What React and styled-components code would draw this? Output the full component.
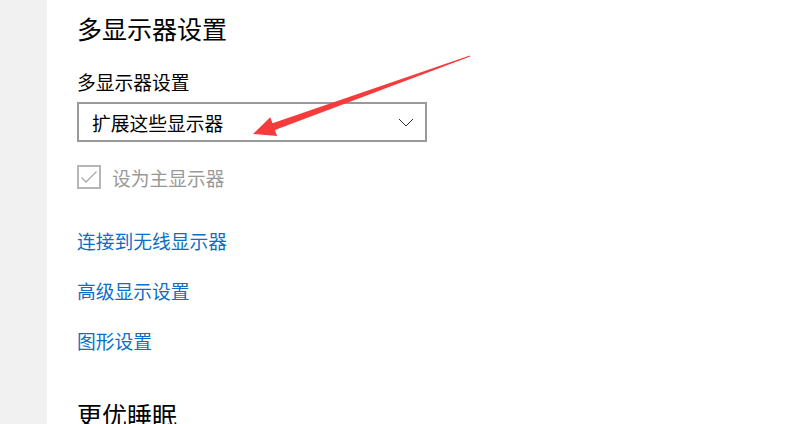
import styled, { createGlobalStyle } from 'styled-components'

const GlobalStyle = createGlobalStyle`
  * {
    box-sizing: border-box;
  }
  html, body {
    margin: 0;
    padding: 0;
    background: #fff;
  }
  body {
    font-family: "Noto Sans CJK SC", "Noto Sans", sans-serif;
  }
`

const Page = styled.div`
  position: relative;
  display: flex;
  width: 808px;
  height: 424px;
  overflow: hidden;
  background: #fff;
`

const Sidebar = styled.div`
  width: 47px;
  flex: none;
  background: #f1f1f1;
`

const Content = styled.div`
  flex: 1;
  display: flex;
  flex-direction: column;
  align-items: flex-start;
  padding: 11px 0 0 30px;
  color: #000;

  & > * {
    flex-shrink: 0;
  }
`

const SectionTitle = styled.h2`
  margin: ${(p) => p.$top || 0}px 0 0;
  font-size: 25px;
  font-weight: 400;
  line-height: 34px;
  white-space: nowrap;
`

const Label = styled.div`
  margin-top: 24px;
  font-size: 18.75px;
  line-height: 26px;
`

const Select = styled.div`
  margin-top: 7px;
  width: 350px;
  height: 40px;
  border: 2px solid #999;
  display: flex;
  align-items: center;
  justify-content: space-between;
  padding: 0 11px 0 13px;
  font-size: 18.75px;
`

const Check = styled.label`
  margin-top: 23px;
  display: flex;
  align-items: center;
  gap: 11px;
  height: 24px;
  color: #999;
  font-size: 18.75px;
`

const Box = styled.span`
  width: 24px;
  height: 24px;
  border: 2px solid #b5b5b5;
  display: flex;
  align-items: center;
  justify-content: center;
`

const Link = styled.a`
  margin-top: ${(p) => p.$top}px;
  color: #0a6fc8;
  text-decoration: none;
  font-size: 18.75px;
  line-height: 26px;
`

const Overlay = styled.svg`
  position: absolute;
  inset: 0;
  pointer-events: none;
`

const App = () => (
  <>
    <GlobalStyle />
    <Page>
      <Sidebar />
      <Content>
        <SectionTitle>多显示器设置</SectionTitle>
        <Label>多显示器设置</Label>
        <Select>
          <span>扩展这些显示器</span>
          <svg width="16" height="9" viewBox="0 0 16 9">
            <path d="M1 1l7 7 7-7" fill="none" stroke="#333" strokeWidth="1" />
          </svg>
        </Select>
        <Check>
          <Box>
            <svg width="18" height="14" viewBox="0 0 18 14">
              <path d="M1.5 7.5l4.5 4.5L16.5 1.5" fill="none" stroke="#aaa" strokeWidth="1.3" />
            </svg>
          </Box>
          设为主显示器
        </Check>
        <Link href="#" $top={39}>连接到无线显示器</Link>
        <Link href="#" $top={24}>高级显示设置</Link>
        <Link href="#" $top={24}>图形设置</Link>
        <SectionTitle $top={43}>更优睡眠</SectionTitle>
      </Content>
      <Overlay width="808" height="424" viewBox="0 0 808 424">
        <polygon
          points="253,134 270.3,117.2 272.5,123.3 469.8,55.5 470.2,56.5 274.9,129.9 277.1,136"
          fill="#f53b3b"
        />
      </Overlay>
    </Page>
  </>
)

export default App
